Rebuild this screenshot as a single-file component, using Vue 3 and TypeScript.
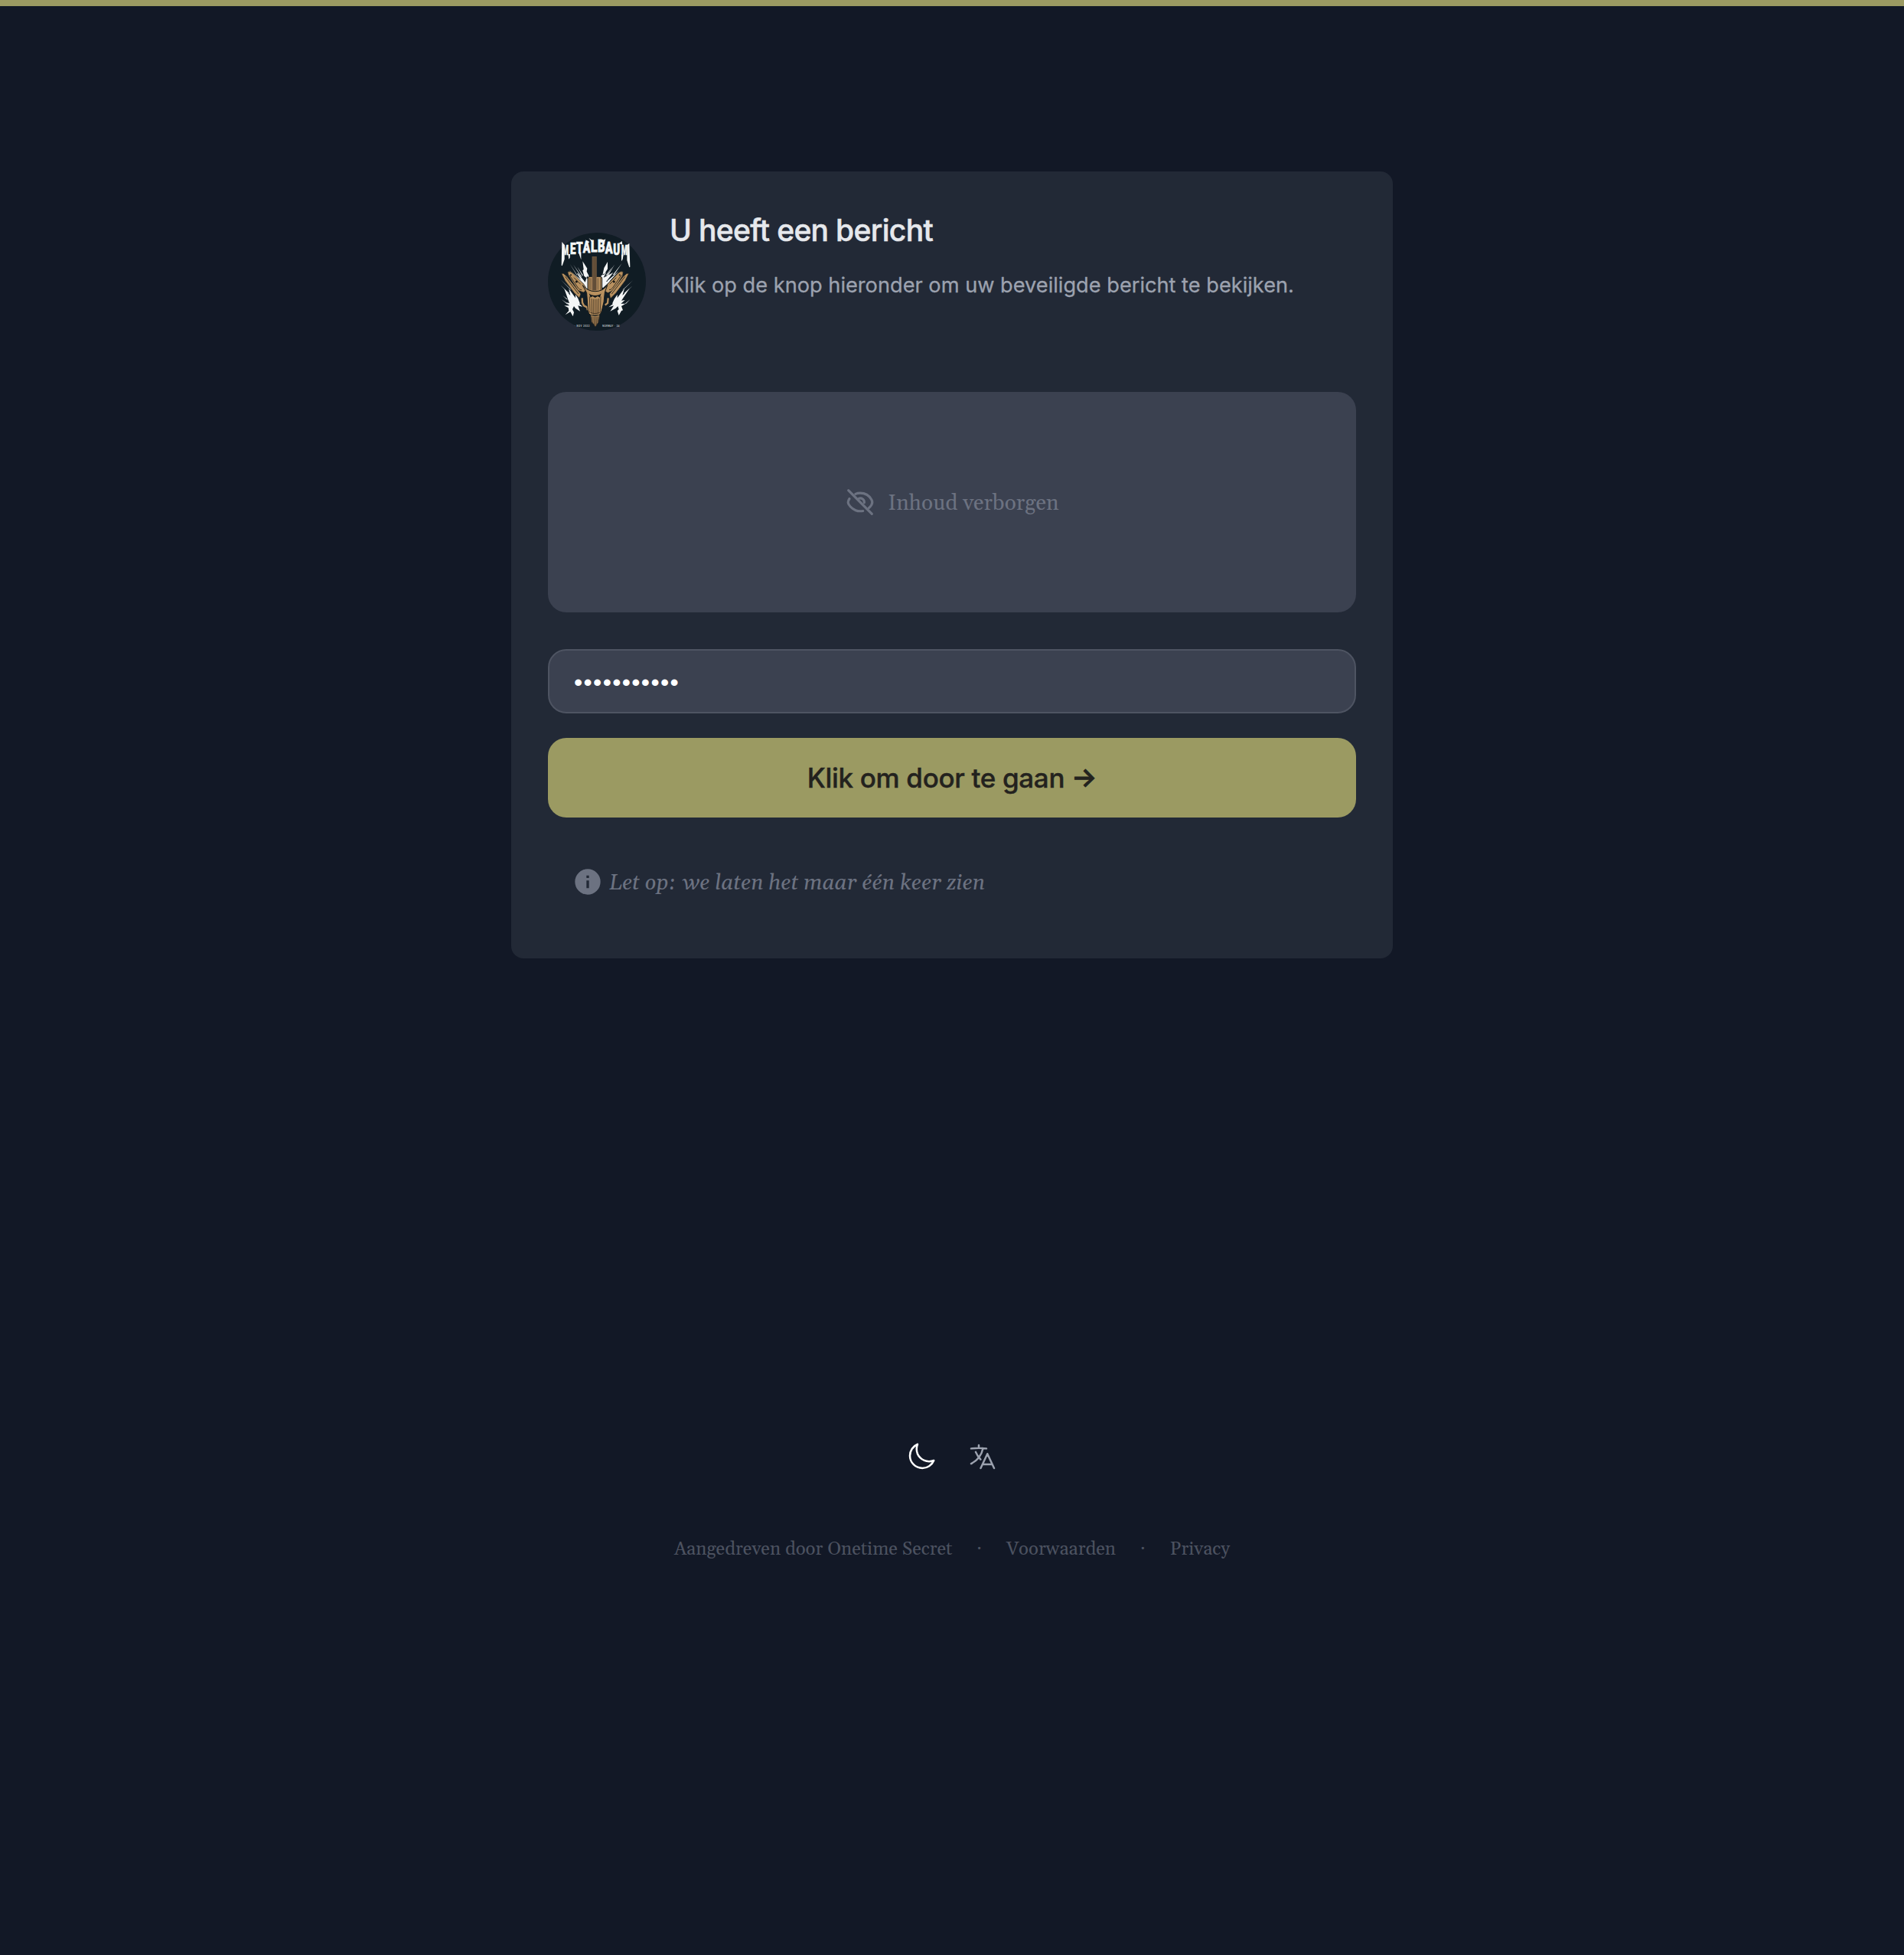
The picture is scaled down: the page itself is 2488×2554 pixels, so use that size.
<script setup lang="ts">
import { ref } from 'vue'

interface Glyph {
  char: string
  x: number
  y: number
  sx: number
  sy: number
}

const passphrase = ref('geheimwoord')

// Band name on the logo, one entry per letter so that the word can arch.
const bandName: Glyph[] = [
  { char: 'M', x: 104, y: 130, sx: 0.52, sy: 1.05 },
  { char: 'E', x: 135, y: 127, sx: 0.74, sy: 1.1 },
  { char: 'T', x: 159, y: 124, sx: 0.76, sy: 1.1 },
  { char: 'A', x: 185, y: 121, sx: 0.77, sy: 1.15 },
  { char: 'L', x: 216, y: 118, sx: 0.86, sy: 1.15 },
  { char: 'B', x: 243, y: 118, sx: 0.82, sy: 1.2 },
  { char: 'A', x: 272, y: 123, sx: 0.8, sy: 1.15 },
  { char: 'U', x: 304, y: 128, sx: 0.74, sy: 1.1 },
  { char: 'M', x: 336, y: 130, sx: 0.5, sy: 1.05 },
]

const links: string[] = ['Aangedreven door Onetime Secret', 'Voorwaarden', 'Privacy']
</script>

<template>
  <div class="page">
    <main class="card">
      <header class="intro">
        <svg class="logo" viewBox="48 42 384 384" role="img" aria-label="Metalbaum">
          <circle cx="240" cy="234" r="192" fill="#101c24" />
          <g fill="#f4f6f6" stroke="#f4f6f6" stroke-width="2" font-family="Roboto, sans-serif" font-weight="900" font-size="54">
            <text
              v-for="(g, i) in bandName"
              :key="i"
              :transform="`translate(${g.x} ${g.y}) scale(${g.sx} ${g.sy})`"
            >{{ g.char }}</text>
          </g>
          <g fill="#f4f6f6">
            <!-- spikes around the band name -->
            <path d="M103 78l10 12v56l-9 26-3-2zM367 84l-9 6v60l9 28 3-2zM127 126h8l-1 14-4 6zM336 128h8l-3 18-5 8zM168 120l10-2 0 30zM204 84l-9-14 16 8zM208 62l16 12 2 14zM248 80l26-13-4 13zM326 84l12-9 2 14zM160 86l-6 2 10-8z" />
            <!-- bolts behind the upper body -->
            <path d="M184 154l18 28-2 12 8 16-2 14-16-12-6-22 4-4zM194 236l-28-34-4 0 26 42-18-10 26 28 10-2 2-28-6-22zM282 156l-14 24-6 28 6-2 14-22zM262 206l14-8-10 20 38-20-28 36 16-2-28 26-10-4 0-40z" />
            <path d="M163 175l24 36-5-2zM148 168l34 48-6-3zM134 164l30 46-4-3zM132 190l56 44-2 6-12-6zM300 176l-26 34 6-2zM310 166l-32 46 6-2zM338 162l-36 46 6-2zM326 192l-46 40 6 4z" />
            <!-- lightning at the sides -->
            <path d="M112 262l24 26-6-26 26 36 0-14 10 16 8 20-4 0 14 12-18-4 8 22-18-12-6-8-6 12 6 12-4 16-10-18-20 12 14-16-2-12-16-8 20 0-12-12 12 2zM368 260l-28 28 8-28-28 38 0-14-12 18-8 18 4 0-18 14 20-6-14 22 22-12 8-8 4 12-6 6 6 18 10-18 6-2-6-16 16-10-18 0 16-14-14 2z" />
            <path d="M98 226l42 40-5-2zM98 248l34 32-5-2zM102 304l26 18-5 0zM106 288l20 16-5-1zM382 228l-42 38 5-2zM380 250l-34 30 5-2zM370 304l-20 16 4 0z" />
          </g>
          <!-- wings -->
          <g fill="#b9915f" stroke="#14191b" stroke-width="2" stroke-linejoin="round">
            <path d="M125 196q10-6 20 4l42 42q12 14 12 26l-12 8-22-8-36-58z" />
            <path d="M343 196q-8-6-20 4l-40 42q-14 16-14 28l14 8 22-10 36-58z" />
            <path d="M101 202l8 0 14 12 54 68-6 16-20-20-36-48z" />
            <path d="M365 202l-8 0-14 12-54 68 4 18 22-22 36-48z" />
          </g>
          <path
            fill="none"
            stroke="#1b1a17"
            stroke-width="2.5"
            d="M132 208l34 50q6 8 14 8M116 214l52 68M336 208l-34 50q-6 8-14 8M350 214l-52 68M150 218l26 26M316 218l-26 26"
          />
          <g fill="#1b1a17">
            <circle cx="138" cy="208" r="3" />
            <circle cx="160" cy="234" r="4.5" />
            <circle cx="329" cy="208" r="3" />
            <circle cx="307" cy="234" r="4.5" />
          </g>
          <path fill="none" stroke="#b9915f" stroke-width="7" d="M182 298l1 18 6 12 12 6 3 12M284 298l-2 20-10 8" />
          <!-- body, neck and pick -->
          <path fill="#b9915f" stroke="#14191b" stroke-width="3" d="M204 222q0-8 8-8h40q8 0 8 8v44q-8 8-28 8t-28-8z" />
          <path fill="none" stroke="#3c3023" stroke-width="2" d="M210 218v48M254 218v48" />
          <rect x="221" y="135" width="18" height="133" fill="#806446" />
          <path stroke="#3a3027" stroke-width="2" fill="none" d="M225 136v132M230 136v132M235 136v132M244 220v46M216 220v46" />
          <path fill="#b9915f" stroke="#14191b" stroke-width="3" stroke-linejoin="round" d="M184 248q20 24 49 24 30 0 48-24l-10 28-4 38-8 34q-4 14-12 18h-30q-10-4-12-18l-5-70z" />
          <path fill="#14191b" d="M209 280q8 8 24 8t24-8l-6 16-8-5-10 6-10-6-8 5z" />
          <path stroke="#3c3023" stroke-width="2.5" fill="none" d="M211 292l2 58M219 300l1 60M226 302v60M233 302v60M240 302v60M247 300l-1 60M255 292l-2 58M206 350q26 18 54 0" />
          <path fill="#b08a5a" stroke="#14191b" stroke-width="2" d="M215 364q18 8 36 0l-4 28-6 8-7 12-7-12-8-8z" />
          <path stroke="#3c3023" stroke-width="2.5" fill="none" d="M221 370l2 28M228 371l1 34M234 371v36M240 371l-1 34M246 370l-2 24" />
          <g fill="#c3c9cb" font-family="Roboto, sans-serif" font-weight="700" font-size="8">
            <text x="152" y="410" textLength="59">· NOV 2022</text>
            <text x="262" y="410" textLength="66">NORWAY · 24</text>
          </g>
        </svg>
        <div class="intro-text">
          <h1>U heeft een bericht</h1>
          <p>Klik op de knop hieronder om uw beveiligde bericht te bekijken.</p>
        </div>
      </header>

      <section class="hidden-content">
        <svg class="icon" viewBox="0 0 24 24" fill="none" stroke="currentColor" stroke-width="1.9" stroke-linecap="round" stroke-linejoin="round">
          <path d="M2.8 2.8l18.4 18.4" />
          <path d="M8.3 5.6C9.4 5.1 10.7 4.9 12 4.9c4.3 0 7.4 2.5 8.9 5.1.8 1.4.8 2.7 0 4.1-.5.9-1.200 1.700-2.100 2.500" />
          <path d="M3.600 9.300C3 10.200 2.500 11.200 2.500 12.100c0 1.800 2.700 5 6 6.300 1.700.7 3.700.8 5.700.5" />
          <path d="M11 9.100c2.300-.6 4.400.9 4.200 3.300" />
        </svg>
        <span class="serif">Inhoud verborgen</span>
      </section>

      <form class="unlock" @submit.prevent>
        <input v-model="passphrase" class="passphrase" type="password" autocomplete="off" aria-label="Wachtwoord" />
        <button class="submit" type="submit">Klik om door te gaan <span class="arrow">→</span></button>
      </form>

      <p class="note">
        <svg class="icon" viewBox="0 0 24 24" fill="currentColor">
          <path d="M13 9h-2V7h2m0 10h-2v-6h2m-1-9A10 10 0 0 0 2 12a10 10 0 0 0 10 10 10 10 0 0 0 10-10A10 10 0 0 0 12 2" />
        </svg>
        <em class="serif">Let op: we laten het maar één keer zien</em>
      </p>
    </main>

    <footer class="footer">
      <div class="toggles">
        <svg class="icon moon" viewBox="0 0 24 24" fill="none" stroke="currentColor" stroke-width="1.5" stroke-linecap="round" stroke-linejoin="round">
          <path d="M21.752 15.002A9.72 9.72 0 0 1 18 15.75c-5.385 0-9.75-4.365-9.75-9.75 0-1.33.266-2.597.748-3.752A9.753 9.753 0 0 0 3 11.25C3 16.635 7.365 21 12.75 21a9.753 9.753 0 0 0 9.002-5.998Z" />
        </svg>
        <svg class="icon language" viewBox="0 0 24 24" fill="none" stroke="currentColor" stroke-width="1.5" stroke-linecap="round" stroke-linejoin="round">
          <path d="m10.5 21 5.25-11.25L21 21m-9-3h7.5M3 5.621a48.474 48.474 0 0 1 6-.371m0 0c1.12 0 2.233.038 3.334.114M9 5.25V3m3.334 2.364C11.176 10.658 7.69 15.08 3 17.502m9.334-12.138c.896.061 1.785.147 2.666.257m-4.589 8.495a18.023 18.023 0 0 1-3.827-5.802" />
        </svg>
      </div>
      <nav class="links">
        <template v-for="(label, i) in links" :key="label">
          <span v-if="i > 0">·</span>
          <a>{{ label }}</a>
        </template>
      </nav>
    </footer>
  </div>
</template>

<style>
html,
body {
  background: #121826;
}
</style>

<style scoped>
.page {
  box-sizing: border-box;
  min-height: 2554px;
  border-top: 8px solid #9b9a62;
  background: #121826;
  display: flex;
  flex-direction: column;
  align-items: center;
  padding-top: 216px;
  font-family: Gelasio, Georgia, "Liberation Serif", serif;
}

.card {
  box-sizing: border-box;
  width: 1152px;
  height: 1028px;
  padding: 48px;
  border-radius: 16px;
  background: #222936;
  display: flex;
  flex-direction: column;
}

.intro {
  display: flex;
  gap: 32px;
  height: 240px;
  font-family: Inter, sans-serif;
}

.logo {
  flex: none;
  width: 128px;
  height: 128px;
  margin-top: 32px;
}

.intro-text {
  padding-top: 1px;
}

h1 {
  margin: 0 0 0 -1px;
  font-size: 39px;
  line-height: 56px;
  font-weight: 500;
  letter-spacing: -0.68px;
  color: #e6e8ec;
  -webkit-text-stroke: 0.5px #e6e8ec;
}

.intro-text p {
  margin: 22px 0 0;
  font-size: 27.2px;
  line-height: 44px;
  color: #9ca2af;
  -webkit-text-stroke: 0.3px #9ca2af;
}

.icon {
  flex: none;
  width: 40px;
  height: 40px;
}

.hidden-content {
  height: 288px;
  border-radius: 24px;
  background: #3b4150;
  color: #6c7281;
  display: flex;
  align-items: center;
  justify-content: center;
  gap: 16px;
  font-size: 28px;
}

.serif {
  padding-top: 3px;
}

.unlock {
  margin-top: 48px;
  display: flex;
  flex-direction: column;
  gap: 32px;
}

.passphrase {
  box-sizing: border-box;
  width: 100%;
  height: 84px;
  padding: 3px 32px 0;
  border: 2px solid #4e5462;
  border-radius: 24px;
  outline: none;
  background: #3b4150;
  color: #fff;
  font-family: "Liberation Sans", sans-serif;
  font-size: 32px;
  letter-spacing: 1.35px;
}

.submit {
  height: 104px;
  padding: 0 0 1px;
  border: 0;
  border-radius: 24px;
  background: #9b9a62;
  color: #23221e;
  font-family: Inter, sans-serif;
  font-size: 35px;
  font-weight: 500;
  letter-spacing: -0.33px;
  -webkit-text-stroke: 0.4px #23221e;
}

.arrow {
  position: relative;
  top: -1px;
  -webkit-text-stroke: 1px #23221e;
}

.note {
  margin: 64px 0 0;
  padding-left: 32px;
  height: 40px;
  display: flex;
  align-items: center;
  gap: 8px;
  color: #6c7281;
  font-size: 28px;
}

.footer {
  margin-top: 631px;
  display: flex;
  flex-direction: column;
  align-items: center;
}

.toggles {
  display: flex;
  gap: 40px;
}

.moon {
  color: #fff;
}

.language {
  color: #9ca2af;
}

.links {
  margin-top: 85px;
  display: flex;
  gap: 32px;
  font-size: 24px;
  line-height: 32px;
  color: #4c5260;
}
</style>
